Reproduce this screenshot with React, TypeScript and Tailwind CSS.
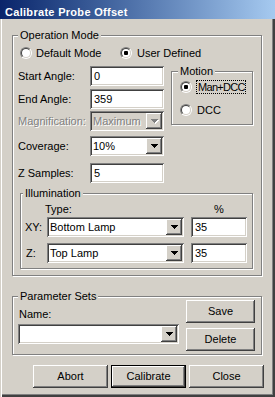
import type { ReactNode } from 'react'

const sunken =
  'shadow-[inset_1px_1px_0_#808080,inset_-1px_-1px_0_#ffffff,inset_2px_2px_0_#404040,inset_-2px_-2px_0_#d4d0c8]'
const raised =
  'shadow-[inset_-1px_-1px_0_#404040,inset_1px_1px_0_#ffffff,inset_-2px_-2px_0_#808080,inset_2px_2px_0_#d4d0c8]'
const embossed = 'text-[#808080] [text-shadow:1px_1px_0_#ffffff]'

function GroupBox({
  label,
  labelLeft,
  className = '',
  children,
}: {
  label: string
  labelLeft: string
  className?: string
  children?: ReactNode
}) {
  return (
    <div
      className={`relative shrink-0 border border-[#808080] shadow-[inset_1px_1px_0_#ffffff,1px_1px_0_#ffffff] ${className}`}
    >
      <span className={`absolute -top-[7px] ${labelLeft} bg-[#d4d0c8] px-[2px] leading-[13px] whitespace-nowrap`}>
        {label}
      </span>
      {children}
    </div>
  )
}

function Radio({ checked }: { checked?: boolean }) {
  return (
    <span className="relative block w-[12px] h-[12px] shrink-0 rounded-full border border-t-[#808080] border-l-[#808080] border-b-white border-r-white">
      <span className="absolute inset-0 rounded-full border border-t-[#404040] border-l-[#404040] border-b-[#d4d0c8] border-r-[#d4d0c8] bg-white flex items-center justify-center">
        {checked && <span className="block w-[4px] h-[4px] bg-black rounded-[1px]" />}
      </span>
    </span>
  )
}

function Arrow({ disabled }: { disabled?: boolean }) {
  const rows = (fill: string, dx: number, dy: number) => (
    <g fill={fill} transform={`translate(${dx} ${dy})`}>
      <rect x="0" y="0" width="7" height="1" />
      <rect x="1" y="1" width="5" height="1" />
      <rect x="2" y="2" width="3" height="1" />
      <rect x="3" y="3" width="1" height="1" />
    </g>
  )
  return (
    <svg width="8" height="5" viewBox="0 0 8 5" shapeRendering="crispEdges" className="block">
      {disabled && rows('#ffffff', 1, 1)}
      {rows(disabled ? '#808080' : '#000000', 0, 0)}
    </svg>
  )
}

function TextField({ value, className = '' }: { value: string; className?: string }) {
  return (
    <div className={`h-[20px] shrink-0 bg-white ${sunken} flex items-center pl-[4px] ${className}`}>{value}</div>
  )
}

function Combo({ value, disabled, className = '' }: { value: string; disabled?: boolean; className?: string }) {
  return (
    <div
      className={`h-[20px] shrink-0 ${disabled ? 'bg-[#d4d0c8]' : 'bg-white'} ${sunken} flex items-center p-[2px] ${className}`}
    >
      <span className={`flex-1 pl-[1px] whitespace-nowrap ${disabled ? embossed : ''}`}>{value}</span>
      <span className={`w-[16px] h-[16px] bg-[#d4d0c8] ${raised} flex items-center pl-[5px]`}>
        <Arrow disabled={disabled} />
      </span>
    </div>
  )
}

function Button({ label, isDefault, className = '' }: { label: string; isDefault?: boolean; className?: string }) {
  return (
    <div
      className={`h-[23px] flex items-center justify-center bg-[#d4d0c8] ${raised} ${isDefault ? 'border border-black' : ''} ${className}`}
    >
      {label}
    </div>
  )
}

function Row({
  label,
  disabled,
  className = '',
  children,
}: {
  label: string
  disabled?: boolean
  className?: string
  children: ReactNode
}) {
  return (
    <div className={`h-[20px] flex items-center ${className}`}>
      <span className={`w-[72px] shrink-0 ${disabled ? embossed : ''}`}>{label}</span>
      {children}
    </div>
  )
}

export default function App() {
  return (
    <div className="w-[275px] h-[397px] overflow-hidden bg-[#d4d0c8] text-black text-[11px] leading-[13px] font-['Liberation_Sans',Arial,sans-serif] shadow-[inset_1px_0_0_#d4d0c8,inset_2px_0_0_#ffffff,inset_0_-2px_0_#404040,inset_-2px_0_0_#404040,inset_0_-3px_0_#808080,inset_-3px_0_0_#808080]">
      {/* Title bar */}
      <div className="h-[19px] bg-linear-to-r from-[#0a246a] to-[#a6caf0] text-white font-bold pl-[5px] pt-[6px] leading-[12px] tracking-[0.3px] whitespace-nowrap">
        Calibrate Probe Offset
      </div>

      <div className="pl-[12px]">
        {/* Operation Mode */}
        <GroupBox label="Operation Mode" labelLeft="left-[5px]" className="mt-[16px] w-[250px] h-[241px]">
          <div className="mt-[11px] pl-[7px] h-[12px] flex items-center">
            <div className="w-[100px] flex items-center gap-[4px]">
              <Radio />
              <span className="whitespace-nowrap">Default Mode</span>
            </div>
            <div className="flex items-center gap-[5px]">
              <Radio checked />
              <span className="whitespace-nowrap">User Defined</span>
            </div>
          </div>

          <div className="mt-[7px] pl-[5px] flex items-start">
            <div className="w-[146px] shrink-0">
              <Row label="Start Angle:">
                <TextField value="0" className="w-[74px]" />
              </Row>
              <Row label="End Angle:" className="mt-[3px]">
                <TextField value="359" className="w-[74px]" />
              </Row>
              <Row label="Magnification:" disabled className="mt-[2px]">
                <Combo value="Maximum" disabled className="w-[74px]" />
              </Row>
              <Row label="Coverage:" className="mt-[5px]">
                <Combo value="10%" className="w-[74px]" />
              </Row>
              <Row label="Z Samples:" className="mt-[7px]">
                <TextField value="5" className="w-[74px]" />
              </Row>
            </div>

            {/* Motion */}
            <GroupBox label="Motion" labelLeft="left-[6px]" className="ml-[7px] mt-[5px] w-[82px] h-[54px]">
              <div className="mt-[9px] pl-[8px] h-[12px] flex items-center gap-[4px]">
                <Radio checked />
                <span className="border border-dotted border-black leading-[12px] tracking-[-0.7px] pl-px whitespace-nowrap">
                  Man+DCC
                </span>
              </div>
              <div className="mt-[11px] pl-[8px] h-[12px] flex items-center gap-[5px]">
                <Radio />
                <span>DCC</span>
              </div>
            </GroupBox>
          </div>

          {/* Illumination */}
          <GroupBox label="Illumination" labelLeft="left-[2px]" className="mt-[10px] ml-[7px] w-[233px] h-[76px]">
            <div className="mt-[9px] pl-[4px] h-[13px] flex">
              <span className="w-[20px] shrink-0" />
              <span className="w-[146px] shrink-0">Type:</span>
              <span className="w-[56px] shrink-0 text-center">%</span>
            </div>
            <div className="mt-[1px] pl-[4px] h-[20px] flex items-center">
              <span className="w-[22px] shrink-0">XY:</span>
              <Combo value="Bottom Lamp" className="w-[137px]" />
              <TextField value="35" className="ml-[7px] w-[56px]" />
            </div>
            <div className="mt-[6px] pl-[4px] h-[20px] flex items-center">
              <span className="w-[22px] shrink-0 pl-px">Z:</span>
              <Combo value="Top Lamp" className="w-[137px]" />
              <TextField value="35" className="ml-[7px] w-[56px]" />
            </div>
          </GroupBox>
        </GroupBox>

        {/* Parameter Sets */}
        <GroupBox label="Parameter Sets" labelLeft="left-[5px]" className="mt-[20px] w-[250px] h-[59px]">
          <div className="flex">
            <div className="pl-[5px]">
              <div className="mt-[11px] pl-px">Name:</div>
              <Combo value="" className="mt-[3px] w-[161px]" />
            </div>
            <div className="ml-[7px] mt-[3px] w-[69px]">
              <Button label="Save" />
              <Button label="Delete" className="mt-[5px]" />
            </div>
          </div>
        </GroupBox>

        {/* Dialog buttons */}
        <div className="mt-[10px] ml-[21px] flex gap-[3px]">
          <Button label="Abort" className="w-[75px]" />
          <Button label="Calibrate" isDefault className="w-[75px]" />
          <Button label="Close" className="w-[75px]" />
        </div>
      </div>
    </div>
  )
}
